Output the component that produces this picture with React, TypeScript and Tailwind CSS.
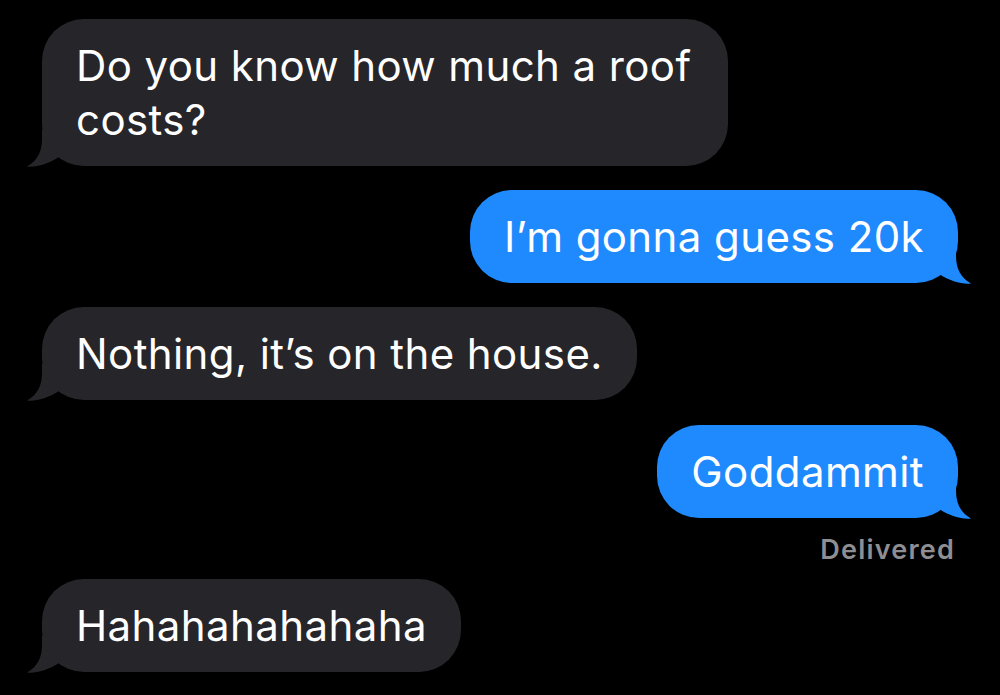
import React from 'react';

type Side = 'in' | 'out';

const Tail = ({ side }: { side: Side }) => (
  <svg
    className={
      side === 'in'
        ? 'absolute -left-[15px] -bottom-px'
        : 'absolute -right-[13px] -bottom-px -scale-x-100'
    }
    width="40"
    height="37"
    viewBox="0 0 40 37"
  >
    <path
      d="M15 0 L15 9 C15 22 10 31 0 36.5 C9 37.5 21 34 32 27 L40 20 L40 0 Z"
      fill={side === 'in' ? '#26252a' : '#1f8afe'}
    />
  </svg>
);

const Bubble = ({ side, text, className = '' }: { side: Side; text: string; className?: string }) => (
  <div className={side === 'in' ? 'flex justify-start' : 'flex justify-end'}>
    <div
      className={`relative rounded-[42px] px-[34px] py-[19.5px] text-[42px] leading-[54px] tracking-[0.4px] text-white ${
        side === 'in' ? 'bg-[#26252a]' : 'bg-[#1f8afe]'
      } ${className}`}
    >
      <Tail side={side} />
      <span className="relative">{text}</span>
    </div>
  </div>
);

export default function App() {
  return (
    <div className="min-h-screen bg-black px-[42px] pt-[19px] font-[Inter,'Liberation_Sans',sans-serif] antialiased">
      <Bubble side="in" text="Do you know how much a roof costs?" className="max-w-[686px]" />
      <div className="mt-[24px]">
        <Bubble side="out" text="I’m gonna guess 20k" />
      </div>
      <div className="mt-[24px]">
        <Bubble side="in" text="Nothing, it’s on the house." />
      </div>
      <div className="mt-[25px]">
        <Bubble side="out" text="Goddammit" />
      </div>
      <div className="mt-[16px] flex justify-end pr-[3px] text-[27px] font-semibold leading-[32px] tracking-[1.2px] text-[#8e8e93]">
        Delivered
      </div>
      <div className="mt-[13px]">
        <Bubble side="in" text="Hahahahahahaha" />
      </div>
    </div>
  );
}
